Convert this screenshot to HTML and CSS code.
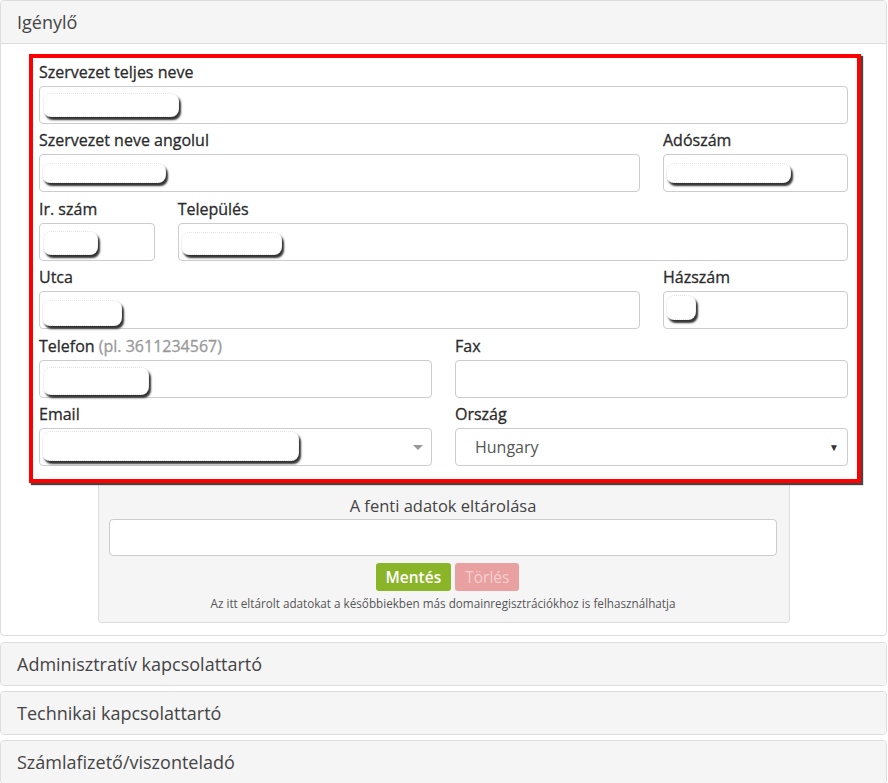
FILE: index.html
```html
<!DOCTYPE html>
<html lang="hu">
<head>
    <meta charset="UTF-8">
    <meta name="viewport" content="width=device-width, initial-scale=1.0">
    <title>Domainregisztráció - Igénylő</title>
    <link rel="stylesheet" href="styles.css">
</head>
<body>

<div class="panel">
    <div class="panel-heading">Igénylő</div>
    <div class="panel-body">

        <div class="highlight">
            <div class="form-grid">
                <div class="field span-12">
                    <label>Szervezet teljes neve</label>
                    <div class="input"><span class="mask mask-name"></span></div>
                </div>

                <div class="field span-9">
                    <label>Szervezet neve angolul</label>
                    <div class="input"><span class="mask mask-name-en"></span></div>
                </div>
                <div class="field span-3">
                    <label>Adószám</label>
                    <div class="input"><span class="mask mask-tax"></span></div>
                </div>

                <div class="field span-2">
                    <label>Ir. szám</label>
                    <div class="input"><span class="mask mask-zip"></span></div>
                </div>
                <div class="field span-10">
                    <label>Település</label>
                    <div class="input"><span class="mask mask-city"></span></div>
                </div>

                <div class="field span-9">
                    <label>Utca</label>
                    <div class="input"><span class="mask mask-street"></span></div>
                </div>
                <div class="field span-3">
                    <label>Házszám</label>
                    <div class="input"><span class="mask mask-house"></span></div>
                </div>

                <div class="field span-6">
                    <label>Telefon <span class="hint">(pl. 3611234567)</span></label>
                    <div class="input"><span class="mask mask-phone"></span></div>
                </div>
                <div class="field span-6">
                    <label>Fax</label>
                    <div class="input"></div>
                </div>

                <div class="field span-6">
                    <label>Email</label>
                    <div class="input combo"><span class="mask mask-email"></span><span class="combo-caret"></span></div>
                </div>
                <div class="field span-6">
                    <label>Ország</label>
                    <div class="input select"><span class="select-value">Hungary</span><span class="select-arrow">&#9660;</span></div>
                </div>
            </div>
        </div>

        <div class="save-box">
            <div class="save-title">A fenti adatok eltárolása</div>
            <div class="input save-input"></div>
            <div class="save-buttons">
                <button class="btn btn-save">Mentés</button>
                <button class="btn btn-delete" disabled>Törlés</button>
            </div>
            <div class="save-note">Az itt eltárolt adatokat a későbbiekben más domainregisztrációkhoz is felhasználhatja</div>
        </div>

    </div>
</div>

<div class="panel collapsed">
    <div class="panel-heading">Adminisztratív kapcsolattartó</div>
</div>
<div class="panel collapsed">
    <div class="panel-heading">Technikai kapcsolattartó</div>
</div>
<div class="panel collapsed">
    <div class="panel-heading">Számlafizető/viszonteladó</div>
</div>

</body>
</html>
```

FILE: styles.css
```css
body {
    margin: 0;
    font-family: "Open Sans", Arial, sans-serif;
    color: #333;
    background: #fff;
    width: 887px;
}

/* panels */
.panel {
    border: 1px solid #ddd;
    border-radius: 4px;
    margin-bottom: 6px;
    background: #fff;
}
.panel.collapsed {
    margin-bottom: 5px;
}
.panel-heading {
    height: 42px;
    line-height: 42px;
    padding: 0 16px;
    font-size: 18px;
    color: #444;
    background: #f5f5f5;
    border-bottom: 1px solid #ddd;
    border-radius: 4px 4px 0 0;
}
.panel.collapsed .panel-heading {
    border-bottom: 0;
    border-radius: 4px;
}
.panel-body {
    padding: 10px 0 12px 0;
}

/* outlined form block */
.highlight {
    margin: 0 25px 0 28px;
    border: 4px solid #f00;
    padding: 4px 9px 13px 6px;
    box-shadow: 2px 2px 1px #444;
    background: #fff;
    position: relative;
    z-index: 1;
}
.form-grid {
    display: grid;
    grid-template-columns: repeat(12, 1fr);
    column-gap: 23px;
    row-gap: 6.4px;
}
.span-2 { grid-column: span 2; }
.span-3 { grid-column: span 3; }
.span-6 { grid-column: span 6; }
.span-9 { grid-column: span 9; }
.span-10 { grid-column: span 10; }
.span-12 { grid-column: span 12; }

label {
    display: block;
    font-size: 16px;
    line-height: 20px;
    margin-bottom: 4px;
    color: #2b2b2b;
    -webkit-text-stroke: 0.3px #2b2b2b;
}
.hint {
    color: #999;
    -webkit-text-stroke: 0.3px #999;
}

.input {
    position: relative;
    height: 36px;
    border: 1px solid #ccc;
    border-radius: 4px;
    background: #fff;
}

/* blanked-out values */
.mask {
    position: absolute;
    background: #fff;
    border-radius: 8px;
    box-shadow: 2px 3px 2px #333;
    border: 1px dotted #e4e4e4;
    box-sizing: border-box;
}
.mask-name { left: 3px; top: 6px; width: 136px; height: 24px; }
.mask-name-en { left: 2px; top: 8px; width: 124px; height: 20px; }
.mask-tax { left: 2px; top: 8px; width: 125px; height: 20px; }
.mask-zip { left: 3px; top: 7px; width: 55px; height: 24px; }
.mask-city { left: 2px; top: 8px; width: 101px; height: 23px; }
.mask-street { left: 2px; top: 8px; width: 80px; height: 26px; }
.mask-house { left: 2px; top: 3px; width: 30px; height: 25px; }
.mask-phone { left: 3px; top: 6px; width: 106px; height: 28px; }
.mask-email { left: 2px; top: 2px; width: 257px; height: 30px; }

.combo-caret {
    position: absolute;
    right: 8px;
    top: 16px;
    border-left: 5px solid transparent;
    border-right: 5px solid transparent;
    border-top: 5px solid #999;
}

.select {
    display: flex;
    align-items: center;
    justify-content: space-between;
    padding: 0 8px 0 19px;
}
.select-value {
    font-size: 16px;
    color: #555;
}
.select-arrow {
    font-size: 10px;
    color: #333;
}

/* saved data box */
.save-box {
    margin: -2px 96px 0 97px;
    padding: 13px 12px 12px 10px;
    background: #f5f5f5;
    border: 1px solid #ddd;
    border-radius: 0 0 4px 4px;
    text-align: center;
}
.save-title {
    font-size: 16.5px;
    color: #444;
    line-height: 22px;
    margin-bottom: 2px;
}
.save-input {
    height: 35px;
}
.save-buttons {
    display: flex;
    justify-content: center;
    gap: 4px;
    margin-top: 7px;
    padding-left: 9px;
}
.btn {
    font-family: "Open Sans", Arial, sans-serif;
    font-size: 15.5px;
    font-weight: 600;
    height: 28px;
    padding: 0 10px;
    border: 0;
    border-radius: 3px;
    color: #fff;
}
.btn-save {
    background: #8ab529;
}
.btn-delete {
    background: #e9a0a0;
    color: #f5cfcf;
    font-weight: 400;
}
.save-note {
    font-size: 11.7px;
    color: #555;
    margin-top: 5px;
    line-height: 14px;
}
```
